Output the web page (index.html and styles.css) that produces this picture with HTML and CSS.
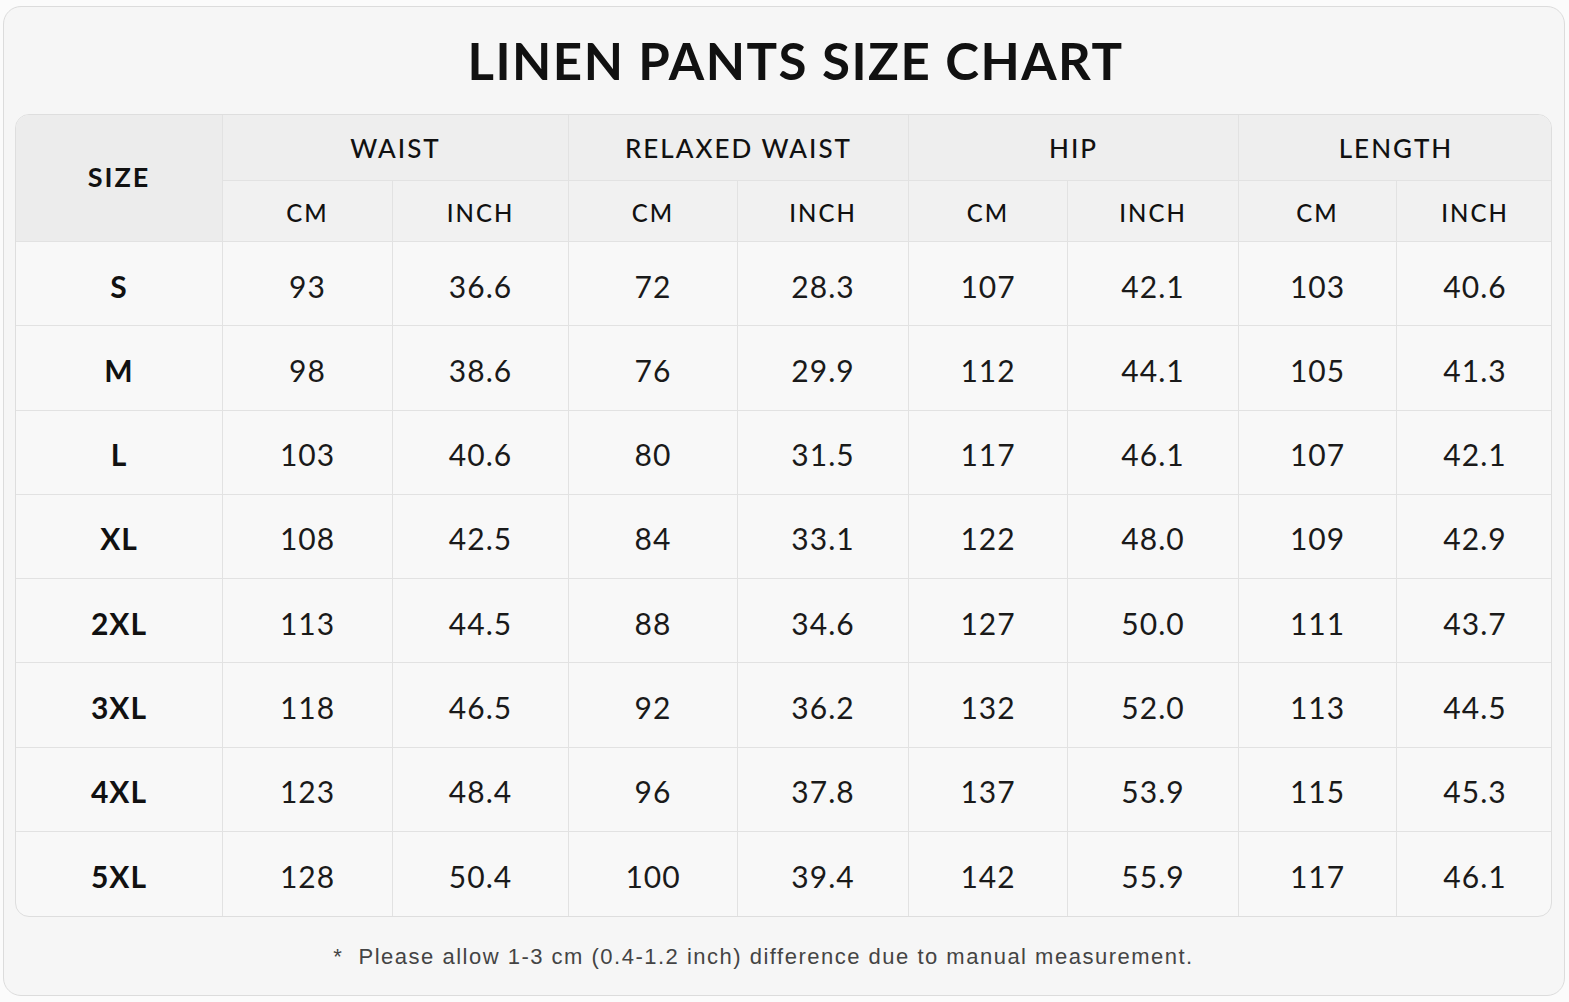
FILE: index.html
```html
<!DOCTYPE html>
<html lang="en">
<head>
<meta charset="utf-8">
<title>Linen Pants Size Chart</title>
<link rel="stylesheet" href="styles.css">
</head>
<body>
<div class="card">
  <h1 class="title">LINEN PANTS SIZE CHART</h1>
  <div class="chart">
    <div class="cell head size-head">SIZE</div>
    <div class="cell head group">WAIST</div>
    <div class="cell head group">RELAXED WAIST</div>
    <div class="cell head group">HIP</div>
    <div class="cell head group last-col">LENGTH</div>
    <div class="cell head unit">CM</div>
    <div class="cell head unit">INCH</div>
    <div class="cell head unit">CM</div>
    <div class="cell head unit">INCH</div>
    <div class="cell head unit">CM</div>
    <div class="cell head unit">INCH</div>
    <div class="cell head unit">CM</div>
    <div class="cell head unit last-col">INCH</div>

    <div class="cell size">S</div><div class="cell">93</div><div class="cell">36.6</div><div class="cell">72</div><div class="cell">28.3</div><div class="cell">107</div><div class="cell">42.1</div><div class="cell">103</div><div class="cell last-col">40.6</div>
    <div class="cell size">M</div><div class="cell">98</div><div class="cell">38.6</div><div class="cell">76</div><div class="cell">29.9</div><div class="cell">112</div><div class="cell">44.1</div><div class="cell">105</div><div class="cell last-col">41.3</div>
    <div class="cell size">L</div><div class="cell">103</div><div class="cell">40.6</div><div class="cell">80</div><div class="cell">31.5</div><div class="cell">117</div><div class="cell">46.1</div><div class="cell">107</div><div class="cell last-col">42.1</div>
    <div class="cell size">XL</div><div class="cell">108</div><div class="cell">42.5</div><div class="cell">84</div><div class="cell">33.1</div><div class="cell">122</div><div class="cell">48.0</div><div class="cell">109</div><div class="cell last-col">42.9</div>
    <div class="cell size">2XL</div><div class="cell">113</div><div class="cell">44.5</div><div class="cell">88</div><div class="cell">34.6</div><div class="cell">127</div><div class="cell">50.0</div><div class="cell">111</div><div class="cell last-col">43.7</div>
    <div class="cell size">3XL</div><div class="cell">118</div><div class="cell">46.5</div><div class="cell">92</div><div class="cell">36.2</div><div class="cell">132</div><div class="cell">52.0</div><div class="cell">113</div><div class="cell last-col">44.5</div>
    <div class="cell size">4XL</div><div class="cell">123</div><div class="cell">48.4</div><div class="cell">96</div><div class="cell">37.8</div><div class="cell">137</div><div class="cell">53.9</div><div class="cell">115</div><div class="cell last-col">45.3</div>
    <div class="cell size last-row">5XL</div><div class="cell last-row">128</div><div class="cell last-row">50.4</div><div class="cell last-row">100</div><div class="cell last-row">39.4</div><div class="cell last-row">142</div><div class="cell last-row">55.9</div><div class="cell last-row">117</div><div class="cell last-row last-col">46.1</div>
  </div>
  <p class="note">*&nbsp; Please allow 1-3 cm (0.4-1.2 inch) difference due to manual measurement.</p>
</div>
</body>
</html>
```
FILE: styles.css
```css
html, body {
  margin: 0;
  padding: 0;
  background: #fbfbfb;
}
body {
  padding: 6px 4px 0 3px;
  font-family: Lato, "Noto Sans", sans-serif;
  color: #161616;
}
.card {
  box-sizing: border-box;
  width: 1562px;
  height: 990px;
  border: 1.5px solid #dcdcdc;
  border-radius: 18px;
  background: #f6f6f6;
  padding: 0 12px 0 11px;
}
.title {
  margin: 0;
  height: 107px;
  padding-left: 24px;
  box-sizing: border-box;
  display: flex;
  align-items: center;
  justify-content: center;
  font-family: Lato, sans-serif;
  font-weight: 700;
  font-size: 51px;
  letter-spacing: 1.5px;
  color: #111;
}
.chart {
  display: grid;
  grid-template-columns: 207px 170px 176px 169px 171px 159px 171px 158px 156px;
  grid-template-rows: 66px 61px repeat(8, 84.25px);
  border: 1px solid #dedede;
  border-radius: 14px;
  overflow: hidden;
  background: #f8f8f8;
  width: 1537px;
  box-sizing: border-box;
}
.cell {
  display: flex;
  align-items: center;
  justify-content: center;
  padding-top: 4px;
  box-sizing: border-box;
  border-right: 1.5px solid #e2e2e2;
  border-bottom: 1.5px solid #e2e2e2;
  font-size: 30px;
  font-weight: 400;
  letter-spacing: 1px;
  color: #1a1a1a;
}
.last-col { border-right: 0; }
.last-row { border-bottom: 0; }
.head {
  padding-top: 0;
  background: #eeeeee;
  font-weight: 500;
  font-size: 26px;
  letter-spacing: 2px;
  color: #111;
}
.size-head {
  grid-row: span 2;
  font-weight: 700;
  font-size: 27px;
  background: #ececec;
  padding-bottom: 4px;
}
.group {
  grid-column: span 2;
}
.unit {
  font-size: 24px;
  background: #f1f1f1;
  padding-top: 2px;
}
.size {
  font-weight: 700;
  font-size: 30px;
  color: #111;
}
.note {
  margin: 0;
  height: 79px;
  padding-right: 40px;
  box-sizing: border-box;
  display: flex;
  align-items: center;
  justify-content: center;
  font-family: "Liberation Sans", Arial, sans-serif;
  font-size: 22px;
  letter-spacing: 1.5px;
  color: #444;
}
```
